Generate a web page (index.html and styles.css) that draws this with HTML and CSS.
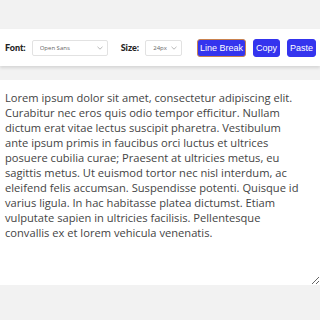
FILE: index.html
```html
<!DOCTYPE html>
<html lang="en">
<head>
    <meta charset="UTF-8">
    <meta name="viewport" content="width=device-width, initial-scale=1.0">
    <title>Text Editor</title>
    <link rel="stylesheet" href="styles.css">
</head>
<body>
    <div class="toolbar">
        <label class="label" for="fontSelect">Font:</label>
        <select id="fontSelect" class="select select-font">
            <option>Open Sans</option>
        </select>
        <label class="label" for="sizeSelect">Size:</label>
        <select id="sizeSelect" class="select select-size">
            <option>24px</option>
        </select>
        <div class="actions">
            <button class="btn btn-focus">Line Break</button>
            <button class="btn">Copy</button>
            <button class="btn">Paste</button>
        </div>
    </div>

    <div class="editor">
        <textarea class="text">Lorem ipsum dolor sit amet, consectetur adipiscing elit. Curabitur nec eros quis odio tempor efficitur. Nullam dictum erat vitae lectus suscipit pharetra. Vestibulum ante ipsum primis in faucibus orci luctus et ultrices posuere cubilia curae; Praesent at ultricies metus, eu sagittis metus. Ut euismod tortor nec nisl interdum, ac eleifend felis accumsan. Suspendisse potenti. Quisque id varius ligula. In hac habitasse platea dictumst. Etiam vulputate sapien in ultricies facilisis. Pellentesque convallis ex et lorem vehicula venenatis.</textarea>
    </div>
</body>
</html>
```

FILE: styles.css
```css
body {
    margin: 0;
    padding: 0;
    background-color: #f2f2f2;
    font-family: 'Lato', sans-serif;
}
.toolbar {
    display: flex;
    align-items: center;
    height: 37px;
    margin-top: 29px;
    padding: 0 4px 0 5px;
    background-color: white;
    box-shadow: 0 2px 3px rgba(0, 0, 0, 0.12);
}
.label {
    font-size: 9px;
    font-weight: 900;
    color: #222;
    margin-right: 6px;
}
.select {
    -webkit-appearance: none;
    appearance: none;
    height: 16px;
    padding: 0 5px 0 7px;
    border: 1px solid #e2e2e2;
    border-radius: 2px;
    background-color: white;
    font-family: 'Open Sans', sans-serif;
    font-size: 6px;
    color: #666;
    background-image: url("data:image/svg+xml;utf8,<svg xmlns='http://www.w3.org/2000/svg' width='6' height='4' viewBox='0 0 6 4'><path d='M0.5 0.8 L3 3.2 L5.5 0.8' fill='none' stroke='%23999' stroke-width='0.7'/></svg>");
    background-repeat: no-repeat;
    background-position: right 4px center;
}
.select-font {
    width: 76px;
    margin-right: 13px;
}
.select-size {
    width: 37px;
}
.actions {
    display: flex;
    gap: 7px;
    margin-left: auto;
}
.btn {
    height: 18px;
    padding: 0 2px;
    border: 1px solid #3434ee;
    border-radius: 3px;
    background-color: #3434ee;
    color: white;
    font-family: 'Liberation Sans', Arial, sans-serif;
    font-size: 9px;
    white-space: nowrap;
}
.btn-focus {
    border-color: #c9834f;
}
.editor {
    margin-top: 14px;
}
.text {
    display: block;
    box-sizing: border-box;
    width: 100%;
    height: 205px;
    margin: 0;
    padding: 10px 16px 10px 5px;
    border: none;
    outline: none;
    background-color: white;
    font-family: 'Open Sans', sans-serif;
    font-size: 11.15px;
    line-height: 15px;
    color: #444;
    resize: vertical;
}
```
